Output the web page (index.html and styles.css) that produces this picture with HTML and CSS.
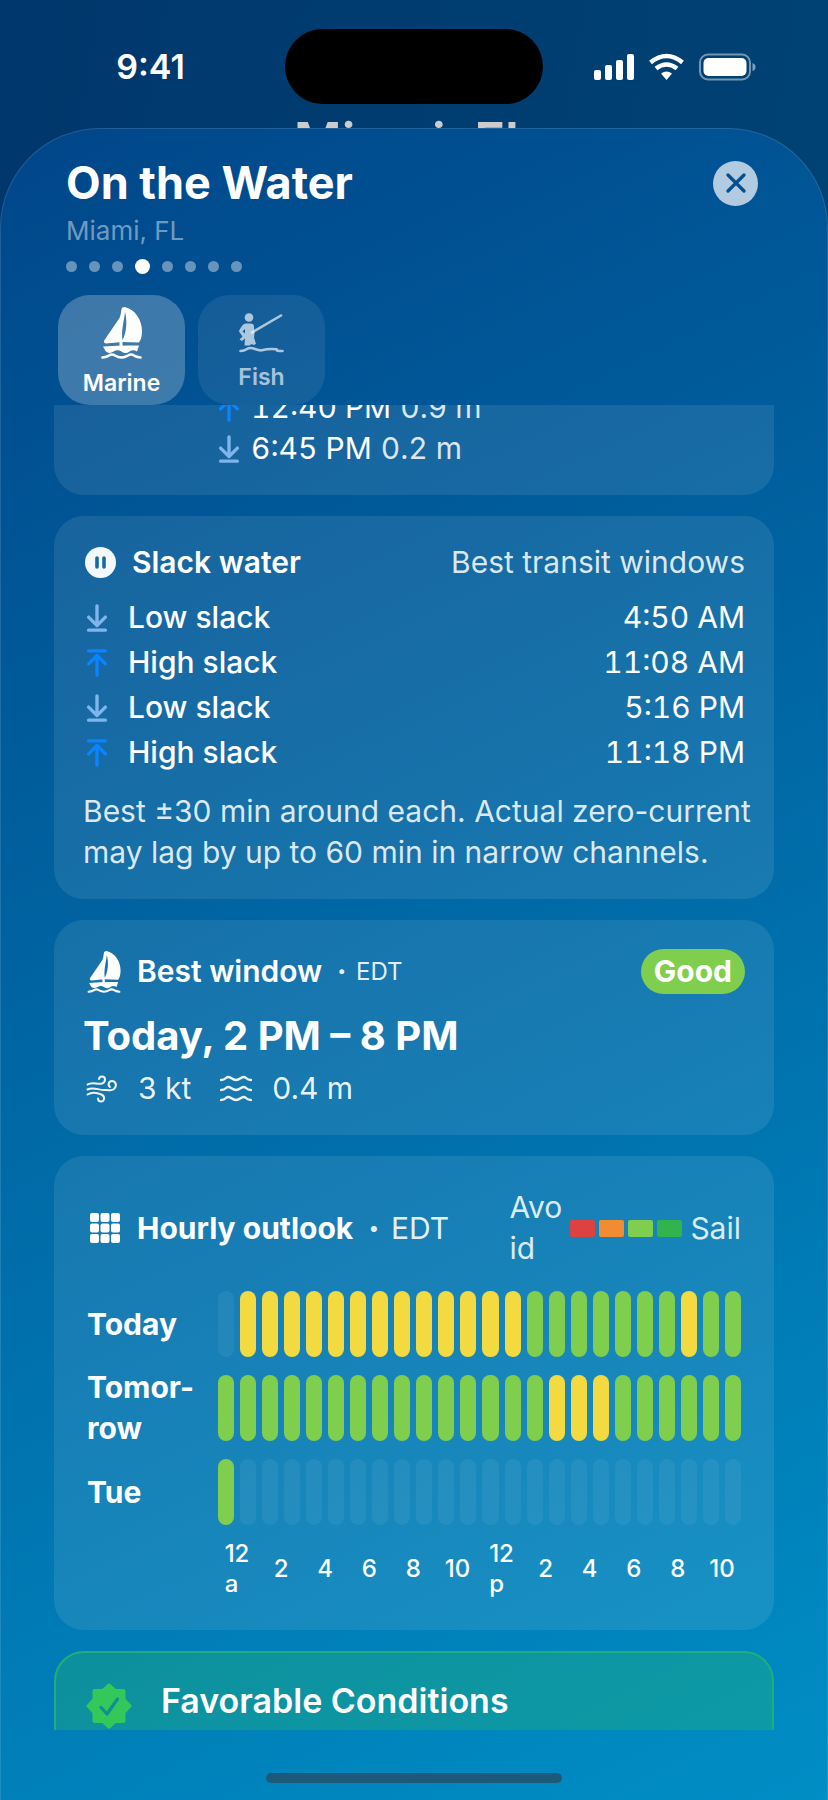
FILE: index.html
```
<!DOCTYPE html>
<html lang="en">
<head>
  <meta charset="utf-8">
  <meta name="viewport" content="width=device-width, initial-scale=1">
  <title>On the Water</title>
  <link rel="stylesheet" href="styles.css">
</head>
<body>
  <svg class="sprite" aria-hidden="true">
    <symbol id="sail" viewBox="0 0 41 52">
      <path fill="currentColor" fill-rule="evenodd" d="M23.500 0C34 2 41 13 41 24c0 5-1 9-3 11.500L21 35 5 36.500Q2 36 3.500 33L18.500 11C20 8 20 4 20.500 2Q21 0 23.500 0ZM24 5C23 14 20 24 21.500 33 25.500 26 26.500 14 24 5Z"/>
      <path fill="currentColor" d="M18.500 34h3v5h-3zM2 39.500Q20 38 38 38.500L36 44.500Q32 42 28.500 44.500 24.500 47.500 20.500 44.500 16.500 42 12.500 44.500 8 47.500 4.500 44Z"/>
      <path fill="none" stroke="currentColor" stroke-width="2.600" stroke-linecap="round" d="M1.500 50.500Q6 50 8 48.500 11 46.500 14 48.500 20.500 52.500 27 48.500 30 46.500 33 48.500 35 50 39.500 50.500"/>
    </symbol>
    <symbol id="down" viewBox="0 0 22 30">
      <path fill="none" stroke="currentColor" stroke-width="3.600" stroke-linecap="round" stroke-linejoin="round" d="M11 2v20M2 14l9 9 9-9M2 28h18"/>
    </symbol>
    <symbol id="up" viewBox="0 0 22 30">
      <path fill="none" stroke="currentColor" stroke-width="3.600" stroke-linecap="round" stroke-linejoin="round" d="M11 28V8M2 16l9-9 9 9M2 2h18"/>
    </symbol>
  </svg>

  <header class="backdrop">
    <div class="status">
      <span class="clock">9:41</span>
      <span class="island"></span>
      <svg class="signals" viewBox="0 0 164 28" aria-hidden="true">
        <g fill="#fff">
          <rect x="2" y="17" width="7" height="10" rx="2"/>
          <rect x="13" y="12" width="7" height="15" rx="2"/>
          <rect x="24" y="7" width="7" height="20" rx="2"/>
          <rect x="35" y="1" width="7" height="26" rx="2"/>
        </g>
        <g fill="none" stroke="#fff" stroke-width="4.500">
          <path d="M58.500 9.500Q74.500-3.500 90.500 9.500"/>
          <path d="M64 15.500Q74.500 7.500 85 15.500"/>
        </g>
        <path fill="#fff" d="M69 20.500Q74.500 16.500 80 20.500L74.500 27Z"/>
        <rect x="108" y="1.500" width="50" height="25" rx="8" fill="none" stroke="#fff" stroke-opacity=".45" stroke-width="2"/>
        <rect x="111.500" y="5" width="43" height="18" rx="5" fill="#fff"/>
        <path d="M160.500 10q3 1 3 4t-3 4z" fill="#fff" fill-opacity=".5"/>
      </svg>
    </div>
    <div class="city">Miami, FL</div>
  </header>

  <main class="sheet">
    <div class="sheet-head">
      <div class="title-row">
        <h1>On the Water</h1>
        <button class="close" aria-label="Close">
          <svg viewBox="0 0 20 20" aria-hidden="true"><path fill="none" stroke="#00508f" stroke-width="3.200" stroke-linecap="round" d="M2 2l16 16M18 2L2 18"/></svg>
        </button>
      </div>
      <p class="place">Miami, FL</p>
      <div class="dots">
        <i></i><i></i><i></i><i class="on"></i><i></i><i></i><i></i><i></i>
      </div>
      <nav class="tabs">
        <button class="tab active">
          <svg class="tab-sail"><use href="#sail"/></svg>
          Marine
        </button>
        <button class="tab">
          <svg class="tab-fish" viewBox="0 0 45 40" aria-hidden="true">
            <circle cx="10" cy="4.500" r="4.300" fill="currentColor"/>
            <path fill="currentColor" fill-rule="evenodd" d="M6.500 10.500h5q3.500 0 3.500 3l.5 7-.5 4 2 6.500-2.500 1-2-1-2 1.500H5.500l.5-7L3 28 .5 26.500 3.500 23.500 0 18.500Q0 17 3 13 4.500 10.500 6.500 10.500ZM6 16L3.500 18.500 6 20.500Z"/>
            <path fill="none" stroke="currentColor" stroke-width="2.600" stroke-linecap="round" d="M13 19.500L42 2.500M1.500 38Q5 38 8 36t8 0 8 1 9-1 5 1 5.500 1"/>
          </svg>
          Fish
        </button>
      </nav>
    </div>

    <div class="scroll">
      <section class="card tides">
        <div class="tide"><svg class="arrow high"><use href="#up"/></svg>12:40 PM <span>0.9 m</span></div>
        <div class="tide"><svg class="arrow low"><use href="#down"/></svg>6:45 PM <span>0.2 m</span></div>
      </section>

      <section class="card">
        <div class="card-head">
          <svg class="pause" viewBox="0 0 31 31" aria-hidden="true"><circle cx="15.500" cy="15.500" r="15.500" fill="#f3f8fc"/><path stroke="#176a9f" stroke-width="3.600" stroke-linecap="round" d="M12 11v9M19 11v9"/></svg>
          <h2>Slack water</h2>
          <span class="aside">Best transit windows</span>
        </div>
        <ul class="slack">
          <li><svg class="arrow low"><use href="#down"/></svg><b>Low slack</b><time>4:50 AM</time></li>
          <li><svg class="arrow high"><use href="#up"/></svg><b>High slack</b><time>11:08 AM</time></li>
          <li><svg class="arrow low"><use href="#down"/></svg><b>Low slack</b><time>5:16 PM</time></li>
          <li><svg class="arrow high"><use href="#up"/></svg><b>High slack</b><time>11:18 PM</time></li>
        </ul>
        <p class="note">Best ±30 min around each. Actual zero-current<br>may lag by up to 60 min in narrow channels.</p>
      </section>

      <section class="card">
        <div class="card-head window-head">
          <svg class="card-sail"><use href="#sail"/></svg>
          <h2>Best window</h2>
          <span class="zone small"><b>·</b> EDT</span>
          <span class="badge">Good</span>
        </div>
        <p class="window-time">Today, 2 PM – 8 PM</p>
        <div class="metrics">
          <svg viewBox="0 0 32 28" aria-hidden="true"><path fill="none" stroke="currentColor" stroke-width="2" stroke-linecap="round" d="M1.500 9.500C7 6 11 10 16 8.500 20 7 20 1.500 16 1.500q-2.500 0-3 2.500M1.500 14.500C8 11 13 16 20 15c4 0 6 1 8-1 4-4 1-8-2-8-3.500 0-4.500 4-2 6M1.500 19.500C7 16 12 18 15.500 19.500c4 2 3 7-.5 7-2 0-3-1-3-3"/></svg>
          <span>3 kt</span>
          <svg viewBox="0 0 32 28" aria-hidden="true"><path fill="none" stroke="currentColor" stroke-width="2.400" stroke-linecap="round" d="M1 5q3 0 5-2t5 0 5 2 5-2 5 0 5 2M1 15q3 0 5-2t5 0 5 2 5-2 5 0 5 2M1 25q3 0 5-2t5 0 5 2 5-2 5 0 5 2"/></svg>
          <span>0.4 m</span>
        </div>
      </section>

      <section class="card hourly">
        <div class="card-head">
          <svg class="grid-icon" viewBox="0 0 30 30" aria-hidden="true">
            <g fill="#fff">
              <rect width="9" height="9" rx="2"/><rect x="10.500" width="9" height="9" rx="2"/><rect x="21" width="9" height="9" rx="2"/>
              <rect y="10.500" width="9" height="9" rx="2"/><rect x="10.500" y="10.500" width="9" height="9" rx="2"/><rect x="21" y="10.500" width="9" height="9" rx="2"/>
              <rect y="21" width="9" height="9" rx="2"/><rect x="10.500" y="21" width="9" height="9" rx="2"/><rect x="21" y="21" width="9" height="9" rx="2"/>
            </g>
          </svg>
          <h2 class="bold">Hourly outlook</h2>
          <span class="zone"><b>·</b> EDT</span>
          <div class="legend">
            <span>Avo<br>id</span>
            <div class="swatches"><i class="avoid"></i><i class="poor"></i><i class="good"></i><i class="great"></i></div>
            <span>Sail</span>
          </div>
        </div>
        <div class="days">
          <span class="day">Today</span>
          <div class="bars">
            <i></i><i class="fair"></i><i class="fair"></i><i class="fair"></i><i class="fair"></i><i class="fair"></i>
            <i class="fair"></i><i class="fair"></i><i class="fair"></i><i class="fair"></i><i class="fair"></i><i class="fair"></i>
            <i class="fair"></i><i class="fair"></i><i class="good"></i><i class="good"></i><i class="good"></i><i class="good"></i>
            <i class="good"></i><i class="good"></i><i class="good"></i><i class="fair"></i><i class="good"></i><i class="good"></i>
          </div>
          <span class="day">Tomor-<br>row</span>
          <div class="bars">
            <i class="good"></i><i class="good"></i><i class="good"></i><i class="good"></i><i class="good"></i><i class="good"></i>
            <i class="good"></i><i class="good"></i><i class="good"></i><i class="good"></i><i class="good"></i><i class="good"></i>
            <i class="good"></i><i class="good"></i><i class="good"></i><i class="fair"></i><i class="fair"></i><i class="fair"></i>
            <i class="good"></i><i class="good"></i><i class="good"></i><i class="good"></i><i class="good"></i><i class="good"></i>
          </div>
          <span class="day">Tue</span>
          <div class="bars">
            <i class="good"></i><i></i><i></i><i></i><i></i><i></i><i></i><i></i><i></i><i></i><i></i><i></i>
            <i></i><i></i><i></i><i></i><i></i><i></i><i></i><i></i><i></i><i></i><i></i><i></i>
          </div>
          <div class="hours">
            <span>12<br>a</span><span>2</span><span>4</span><span>6</span><span>8</span><span>10</span>
            <span>12<br>p</span><span>2</span><span>4</span><span>6</span><span>8</span><span>10</span>
          </div>
        </div>
      </section>

      <section class="card favorable">
        <svg class="seal" viewBox="0 0 46 46" aria-hidden="true">
          <path fill="#34c759" stroke="#34c759" stroke-width="4" stroke-linejoin="round" d="M23 2.500L29 8H37.500V16.500L43.500 23 37.500 29.500V38H29L23 43.500 17 38H8.500V29.500L2.500 23 8.500 16.500V8H17Z"/>
          <path fill="none" stroke="#0f8f95" stroke-width="3.200" stroke-linecap="round" stroke-linejoin="round" d="M15 24.500l6 6.500L31.500 16"/>
        </svg>
        <h3>Favorable Conditions</h3>
      </section>
    </div>
    <div class="home"></div>
  </main>
</body>
</html>
```
FILE: styles.css
```
* {
  box-sizing: border-box;
}
body {
  margin: 0;
  height: 100vh;
  display: flex;
  flex-direction: column;
  overflow: hidden;
  font-family: Inter, "Liberation Sans", sans-serif;
  font-size: 30px;
  line-height: 41px;
  color: #fff;
  background: linear-gradient(100deg, #00376c, #004677);
}
h1, h2, h3, p, ul {
  margin: 0;
  padding: 0;
}
button {
  border: none;
  padding: 0;
  font-family: inherit;
  cursor: pointer;
}
.sprite {
  display: none;
}

/* status bar and the page title peeking out behind the sheet */
.backdrop {
  flex: none;
  height: 128px;
  overflow: hidden;
}
.status {
  display: grid;
  grid-template-columns: 1fr 258px 1fr;
  align-items: center;
  padding-top: 29px;
}
.clock {
  font-size: 34px;
  font-weight: 600;
  text-align: center;
  padding-left: 16px;
}
.island {
  height: 75px;
  border-radius: 38px;
  background: #000;
}
.signals {
  width: 164px;
  height: 28px;
  justify-self: center;
  margin-right: 24px;
}
.city {
  margin-top: 8px;
  font-size: 52px;
  line-height: 60px;
  font-weight: 600;
  text-align: center;
  color: #ccc;
}

.sheet {
  flex: 1;
  min-height: 0;
  display: flex;
  flex-direction: column;
  padding: 0 53px;
  border: 1px solid rgba(255, 255, 255, 0.12);
  border-bottom: none;
  border-radius: 100px 100px 0 0;
  background: linear-gradient(154deg, #004689, #008ec5) border-box;
}
.sheet-head {
  flex: none;
  padding: 28px 16px 0 12px;
}
.title-row {
  display: flex;
  justify-content: space-between;
  align-items: center;
  height: 52px;
}
h1 {
  font-size: 45px;
  line-height: 52px;
  font-weight: 700;
}
.close {
  width: 45px;
  height: 45px;
  border-radius: 50%;
  background: #b3cbe0;
  display: flex;
  align-items: center;
  justify-content: center;
}
.close svg {
  width: 20px;
  height: 20px;
}
.place {
  font-size: 26px;
  line-height: 44px;
  color: rgba(255, 255, 255, 0.45);
}
.dots {
  display: flex;
  align-items: center;
  gap: 12px;
  height: 26px;
}
.dots i {
  width: 11px;
  height: 11px;
  border-radius: 50%;
  background: rgba(255, 255, 255, 0.4);
}
.dots .on {
  width: 15px;
  height: 15px;
  background: #fff;
}
.tabs {
  display: flex;
  gap: 13px;
  margin: 16px 0 0 -8px;
}
.tab {
  width: 127px;
  height: 110px;
  padding-top: 4px;
  border-radius: 32px;
  display: flex;
  flex-direction: column;
  align-items: center;
  justify-content: center;
  gap: 10px;
  font-size: 23px;
  line-height: 28px;
  font-weight: 600;
  color: rgba(255, 255, 255, 0.65);
  background: rgba(255, 255, 255, 0.08);
}
.tab.active {
  color: #fff;
  background: rgba(255, 255, 255, 0.24);
}
.tab-sail {
  width: 41px;
  height: 52px;
}
.tab-fish {
  width: 45px;
  height: 40px;
}

.scroll {
  flex: 1;
  min-height: 0;
  overflow: hidden;
  display: flex;
  flex-direction: column;
  gap: 21px;
}
.card {
  flex: none;
  padding: 26px 29px;
  border-radius: 30px;
  background: rgba(255, 255, 255, 0.09);
}
/* list is scrolled part way through the tide card */
.tides {
  margin-top: -44px;
  padding-left: 164px;
}
.tide {
  display: flex;
  align-items: center;
  gap: 11px;
  font-variant-numeric: tabular-nums;
}
.tide span {
  margin-left: -2px;
  color: rgba(255, 255, 255, 0.85);
}
.arrow {
  width: 22px;
  height: 28px;
  flex: none;
}
.low {
  color: #7fb5ec;
}
.high {
  color: #0a84ff;
}
.card-head {
  display: flex;
  align-items: center;
}
h2 {
  font-size: 30px;
  font-weight: 600;
}
h2.bold {
  font-weight: 700;
}
.pause {
  width: 31px;
  height: 31px;
  margin: 0 16px 0 2px;
}
.aside {
  margin-left: auto;
  color: rgba(255, 255, 255, 0.85);
}
.slack {
  list-style: none;
  display: flex;
  flex-direction: column;
  gap: 4px;
  margin: 14px 0 18px;
}
.slack li {
  display: flex;
  align-items: center;
  padding-left: 3px;
}
.slack b {
  font-weight: 500;
  margin-left: 20px;
}
.slack time {
  margin-left: auto;
  font-variant-numeric: tabular-nums;
}
.note {
  white-space: nowrap;
  color: rgba(255, 255, 255, 0.85);
}

.window-head {
  height: 51px;
}
.card-sail {
  width: 34px;
  height: 42px;
  margin: 0 16px 0 4px;
}
.zone {
  margin-left: 15px;
  color: rgba(255, 255, 255, 0.9);
}
.zone b {
  margin-right: 3px;
  font-weight: 900;
}
.zone.small {
  font-size: 24px;
}
.badge {
  margin-left: auto;
  padding: 2px 13px;
  border-radius: 23px;
  background: #80ce4d;
  font-weight: 700;
}
.window-time {
  margin: 14px 0 7px;
  font-size: 40px;
  line-height: 50px;
  font-weight: 700;
}
.metrics {
  display: flex;
  align-items: center;
  color: rgba(255, 255, 255, 0.92);
}
.metrics svg {
  width: 32px;
  height: 28px;
  margin: 0 20px 0 3px;
}
.metrics span + svg {
  margin-left: 29px;
}

.hourly {
  padding: 31px 33px;
}
.grid-icon {
  width: 30px;
  height: 30px;
  margin: 0 17px 0 3px;
}
.legend {
  margin-left: auto;
  display: flex;
  align-items: center;
  gap: 8px;
  color: rgba(255, 255, 255, 0.85);
}
.swatches {
  display: flex;
  gap: 4px;
}
.swatches i {
  width: 25px;
  height: 17px;
  border-radius: 2px;
}
.avoid {
  background: #dc4240;
}
.poor {
  background: #f28c33;
}
.good {
  background: #80ce4d;
}
.great {
  background: #33b34d;
}
.days {
  display: grid;
  grid-template-columns: 113px 1fr;
  column-gap: 18px;
  row-gap: 10px;
  align-items: center;
  margin-top: 22px;
}
.day {
  font-weight: 700;
}
.bars {
  display: grid;
  grid-template-columns: repeat(24, 1fr);
  gap: 6px;
  height: 66px;
}
.bars i {
  border-radius: 8px;
}
.bars i:not([class]) {
  background: rgba(255, 255, 255, 0.06);
}
.bars .fair {
  background: #f2da40;
}
.hours {
  grid-column: 2;
  display: grid;
  grid-template-columns: repeat(12, 1fr);
  gap: 6px;
  align-items: center;
  justify-items: center;
  margin-top: 4px;
  font-size: 24px;
  line-height: 30px;
  font-weight: 500;
}

.favorable {
  display: flex;
  align-items: flex-start;
  gap: 29px;
  padding: 27px 30px;
  border: 2px solid #1fb07a;
  background: rgba(52, 199, 89, 0.26);
}
.seal {
  width: 46px;
  height: 46px;
  margin-top: 3px;
}
h3 {
  font-size: 34px;
  font-weight: 600;
}
.home {
  flex: none;
  width: 296px;
  height: 10px;
  margin: 43px auto 17px;
  border-radius: 5px;
  background: #1d5a7a;
}
```
